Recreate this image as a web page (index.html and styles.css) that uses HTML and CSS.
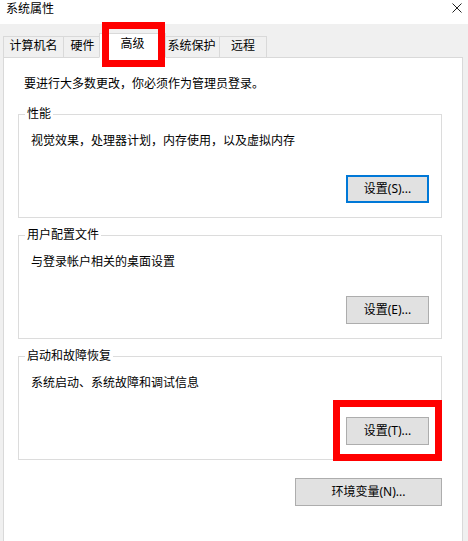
FILE: index.html
```html
<!DOCTYPE html>
<html lang="zh-CN">
<head>
<meta charset="utf-8">
<title>系统属性</title>
<link rel="stylesheet" href="styles.css">
</head>
<body>
<div class="window">
  <div class="titlebar">
    <span class="title">系统属性</span>
    <svg class="close" width="10" height="10" viewBox="0 0 10 10"><path d="M0.5 0.5 L9.5 9.5 M9.5 0.5 L0.5 9.5" stroke="#222" stroke-width="1" fill="none"/></svg>
  </div>
  <div class="tabs">
    <div class="tab tab-1">计算机名</div>
    <div class="tab tab-2">硬件</div>
    <div class="tab tab-3 active">高级</div>
    <div class="tab tab-4">系统保护</div>
    <div class="tab tab-5">远程</div>
  </div>
  <div class="panel">
    <div class="intro">要进行大多数更改，你必须作为管理员登录。</div>
    <fieldset class="group first">
      <legend>性能</legend>
      <div class="group-body">
        <div class="desc">视觉效果，处理器计划，内存使用，以及虚拟内存</div>
        <div class="actions"><button class="btn focused">设置(S)...</button></div>
      </div>
    </fieldset>
    <fieldset class="group">
      <legend>用户配置文件</legend>
      <div class="group-body">
        <div class="desc">与登录帐户相关的桌面设置</div>
        <div class="actions"><button class="btn">设置(E)...</button></div>
      </div>
    </fieldset>
    <fieldset class="group">
      <legend>启动和故障恢复</legend>
      <div class="group-body">
        <div class="desc">系统启动、系统故障和调试信息</div>
        <div class="actions"><button class="btn">设置(T)...</button></div>
      </div>
    </fieldset>
    <div class="env-row"><button class="btn btn-wide">环境变量(N)...</button></div>
  </div>
  <div class="mark mark-tab"></div>
  <div class="mark mark-btn"></div>
</div>
</body>
</html>
```

FILE: styles.css
```css
* { box-sizing: border-box; }

html, body {
  margin: 0;
  padding: 0;
}

body {
  width: 468px;
  height: 541px;
  overflow: hidden;
  background: #f0f0f0;
  font-family: "Noto Sans", "Noto Sans CJK SC", sans-serif;
  font-size: 12px;
  line-height: 16px;
  color: #000;
}

.window {
  position: relative;
  width: 468px;
  height: 541px;
  display: flex;
  flex-direction: column;
}

.titlebar {
  height: 24px;
  background: #fff;
  display: flex;
  justify-content: space-between;
  align-items: flex-start;
  padding: 1px 6px 0 6px;
}

.close {
  margin-top: 2px;
}

.tabs {
  display: flex;
  align-items: flex-end;
  margin-top: 10px;
  padding-left: 3px;
  height: 24px;
  margin-bottom: -1px;
  position: relative;
  z-index: 1;
}

.tab {
  height: 22px;
  border: 1px solid #d9d9d9;
  background: #f0f0f0;
  padding-top: 1px;
  text-align: center;
  white-space: nowrap;
  margin-left: -1px;
}

.tab-1 { width: 61px; margin-left: 0; }
.tab-2 { width: 39px; }
.tab-3 { width: 67px; margin-left: -3px; margin-right: -2px; }
.tab-4 { width: 57px; margin-left: -1px; }
.tab-5 { width: 48px; }

.tab.active {
  height: 25px;
  background: #fff;
  border-bottom-color: #fff;
  padding-top: 2px;
  position: relative;
  z-index: 2;
}

.panel {
  flex: 1 0 auto;
  margin: 0 5px 0 3px;
  background: #fff;
  border: 1px solid #d9d9d9;
  border-bottom: none;
  padding: 18px 20px 0 14px;
}

.intro {
  margin-left: 6px;
}

.group {
  margin: 9px 0 0 0;
  padding: 0;
  border: 1px solid #dcdcdc;
  min-width: 0;
}

.group.first {
  margin-top: 14px;
}

.group legend {
  margin-left: 6px;
  padding: 0 2px;
  line-height: 16px;
}

.group-body {
  padding: 11px 12px 14px 12px;
}

.desc {
  margin-bottom: 26px;
}

.actions {
  display: flex;
  justify-content: flex-end;
}

.btn {
  width: 83px;
  height: 28px;
  padding: 0;
  margin: 0;
  border: 1px solid #adadad;
  background: #e1e1e1;
  font-family: "Noto Sans", "Noto Sans CJK SC", sans-serif;
  font-size: 12px;
  line-height: 16px;
  color: #000;
  display: flex;
  align-items: center;
  justify-content: center;
}

.btn.focused {
  border: 2px solid #0078d7;
}

.env-row {
  display: flex;
  justify-content: flex-end;
  margin-top: 18px;
}

.btn-wide {
  width: 147px;
}

.mark {
  position: absolute;
  border: 7px solid #ff0000;
  z-index: 5;
}

.mark-tab {
  left: 102px;
  top: 22px;
  width: 63px;
  height: 45px;
}

.mark-btn {
  left: 333px;
  top: 400px;
  width: 109px;
  height: 61px;
}
```
